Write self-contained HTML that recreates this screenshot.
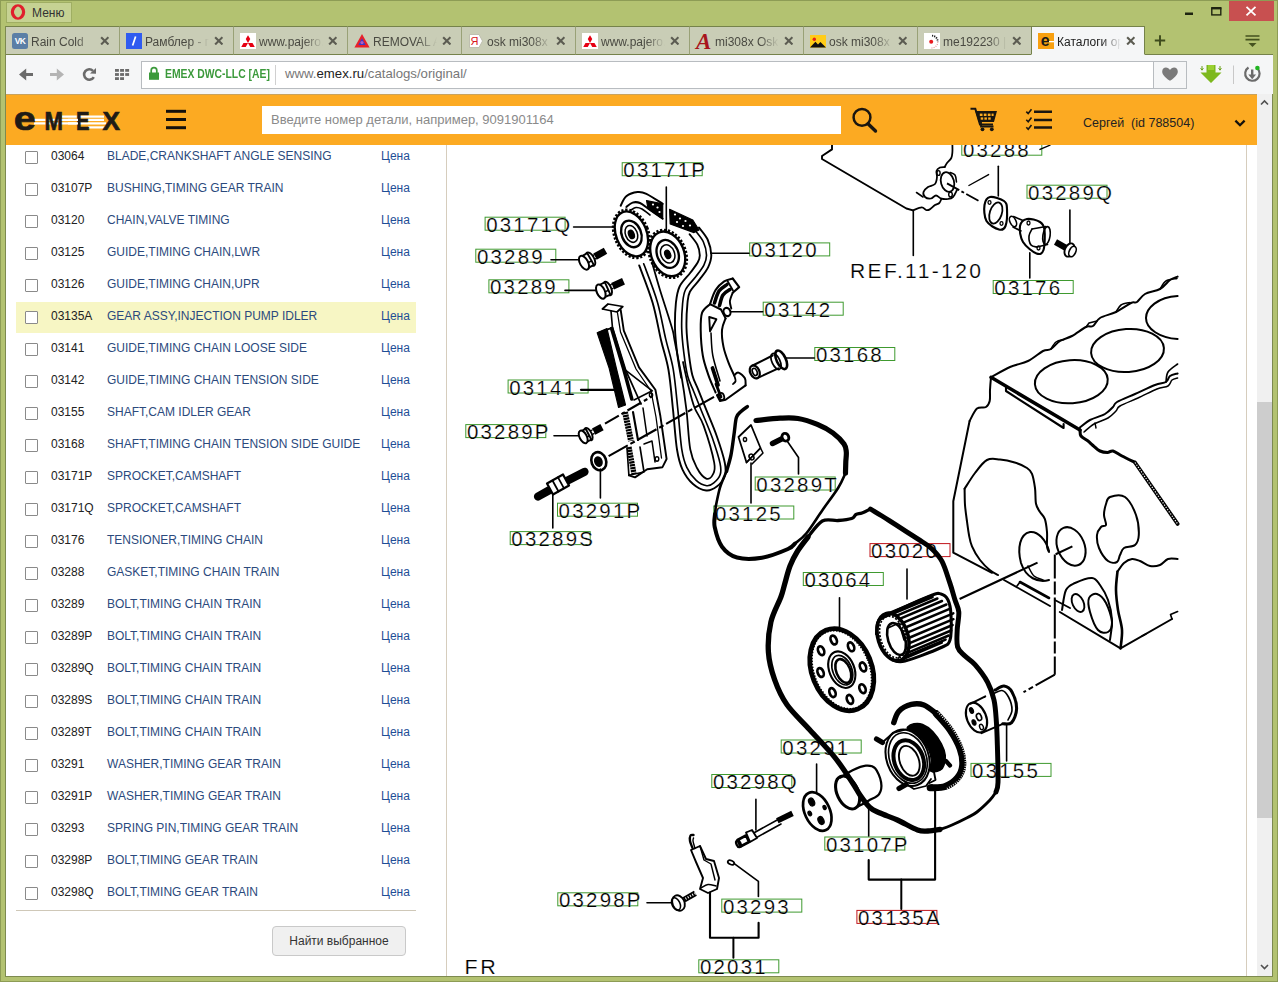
<!DOCTYPE html>
<html lang="ru">
<head>
<meta charset="utf-8">
<title>Каталоги оригинальных запчастей</title>
<style>
*{box-sizing:border-box;margin:0;padding:0}
html,body{width:1278px;height:982px;overflow:hidden}
body{background:#b3c271;font-family:"Liberation Sans","DejaVu Sans",sans-serif;font-size:13px;color:#222;position:relative}
.abs{position:absolute}
#frame{left:0;top:0;width:1278px;height:982px;border:1px solid #8d9c55}
/* title bar */
#menu{left:6px;top:2px;width:66px;height:21px;background:#c6d293;border:1px solid #9fae63;font-size:12px;color:#333;line-height:20px;padding-left:25px}
#close{left:1229px;top:1px;width:45px;height:20px;background:#c85050}
/* tabs */
#tabbar{left:6px;top:26px;width:1267px;height:29px;border-bottom:1px solid #75824a}
.tab{position:absolute;top:26px;height:29px;width:114px;background:#c9cdb6;border-top:1px solid #75824a;border-bottom:1px solid #75824a;border-right:1px solid #99a177;font-size:12px;color:#4a4a42;line-height:30px;white-space:nowrap;overflow:hidden}
.tab .t{position:absolute;left:25px;top:0;width:64px;overflow:hidden;-webkit-mask-image:linear-gradient(90deg,#000 70%,transparent 100%);mask-image:linear-gradient(90deg,#000 70%,transparent 100%)}
.tab .x{position:absolute;left:93.5px;top:8.5px;width:9.6px;height:9.6px}
.tab .ic{position:absolute;left:6px;top:6px;width:16px;height:16px;overflow:visible}
.tab.act{background:#f5f6f7;border-bottom-color:#f5f6f7;border-right:1px solid #75824a;border-left:1px solid #75824a;color:#222}
/* toolbar */
#toolbar{left:6px;top:55px;width:1267px;height:39px;background:#f5f6f7}
#addr{left:141px;top:61px;width:1046px;height:28px;background:#fff;border:1px solid #b8bcc0}
#addr .div{position:absolute;left:1011px;top:0;width:1px;height:26px;background:#b8bcc0}
#addr .heartbg{position:absolute;left:1012px;top:0;width:32px;height:26px;background:#f5f6f7}
#secure{left:165px;top:66px;font-weight:bold;font-size:12.5px;color:#3c9a3c;line-height:16px;white-space:nowrap;transform:scaleX(0.83);transform-origin:0 0}
#url{left:285px;top:65px;font-size:13.2px;color:#777;line-height:18px;white-space:nowrap}
#url b{font-weight:normal;color:#222}
/* page */
#page{left:6px;top:94px;width:1251px;height:882px;background:#fff;overflow:hidden}
#hdr{left:6px;top:94px;width:1251px;height:51px;background:#fcaa22;border-top:1px solid #c9a25c}
#search{left:262px;top:106px;width:579px;height:28px;background:#fff;font-size:13px;color:#8a8a8a;line-height:28px;padding-left:9px}
#user{left:1083px;top:115px;font-size:12.5px;color:#222;line-height:16px;white-space:pre}
#vscroll{left:1257px;top:94px;width:15px;height:882px;background:#f0f0f0}
#thumb{left:1257px;top:402px;width:15px;height:416px;background:#cdcdcd}
/* list */
.row{position:absolute;left:16px;width:400px;height:31px;line-height:28px;font-size:12px;white-space:nowrap}
.row.hl{background:#f7f6c4}
.row i{position:absolute;left:9px;top:9px;width:13px;height:13px;border:1px solid #8a8a8a;background:#fff;border-radius:1px}
.row .c{position:absolute;left:35px;color:#222}
.row .n{position:absolute;left:91px;color:#2b4a7d}
.row .p{position:absolute;left:365px;color:#1f4e96}
#lline{left:16px;top:910px;width:400px;height:1px;background:#cfc8b8}
#btn{left:272px;top:926px;width:134px;height:30px;border:1px solid #c9c9c9;border-radius:4px;background:#f0f0f0;font-size:12px;color:#333;text-align:center;line-height:28px}
#dl{left:446px;top:145px;width:1px;height:831px;background:#d6cdbd}
#dr{left:1246px;top:145px;width:1px;height:831px;background:#d6cdbd}
#dia{left:447px;top:145px;width:799px;height:831px}
</style>
</head>
<body>
<div id="frame" class="abs"></div>
<div class="abs" style="left:5px;top:26px;width:1px;height:951px;background:#7d8a50"></div><div class="abs" style="left:1272px;top:55px;width:1px;height:922px;background:#7d8a50"></div><div class="abs" style="left:5px;top:976px;width:1268px;height:1px;background:#7d8a50"></div>
<div id="menu" class="abs">Меню</div>
<div id="close" class="abs"></div>
<div id="tabbar" class="abs"></div>
<div class="tab" style="left:6px"><svg class="ic" viewBox="0 0 16 16"><rect width="16" height="16" rx="2.5" fill="#5b7fa6"/><text x="8" y="11.3" font-family="Liberation Sans,sans-serif" font-weight="bold" font-size="8.5" fill="#fff" text-anchor="middle" letter-spacing="-0.6">VK</text></svg><span class="t">Rain Cold</span><svg class="x" viewBox="0 0 10 10"><path d="M1.2 1.2L8.8 8.8M8.8 1.2L1.2 8.8" stroke="#5c5c52" stroke-width="2.2" fill="none"/></svg></div>
<div class="tab" style="left:120px"><svg class="ic" viewBox="0 0 16 16"><rect width="16" height="16" fill="#2f5bf0"/><path d="M9.6 3.5L6.6 12.5" stroke="#fff" stroke-width="1.7"/></svg><span class="t">Рамблер - почта</span><svg class="x" viewBox="0 0 10 10"><path d="M1.2 1.2L8.8 8.8M8.8 1.2L1.2 8.8" stroke="#5c5c52" stroke-width="2.2" fill="none"/></svg></div>
<div class="tab" style="left:234px"><svg class="ic" viewBox="0 0 16 16"><rect width="16" height="16" fill="#fff"/><path d="M8 10L5.750 6.100L8 2.200L10.250 6.100Z M8 10L3.500 10L1.250 13.900L5.750 13.900Z M8 10L12.500 10L14.750 13.900L10.250 13.900Z" fill="#e60012"/></svg><span class="t">www.pajero.us</span><svg class="x" viewBox="0 0 10 10"><path d="M1.2 1.2L8.8 8.8M8.8 1.2L1.2 8.8" stroke="#5c5c52" stroke-width="2.2" fill="none"/></svg></div>
<div class="tab" style="left:348px"><svg class="ic" viewBox="0 0 16 16"><path d="M8 1L15.6 14.5L0.4 14.5Z" fill="#e8202a"/><path d="M8 5.2L11.6 12L4.4 12Z" fill="#3a3acb"/><circle cx="8" cy="9.6" r="1.6" fill="#b060c0"/></svg><span class="t">REMOVAL AND</span><svg class="x" viewBox="0 0 10 10"><path d="M1.2 1.2L8.8 8.8M8.8 1.2L1.2 8.8" stroke="#5c5c52" stroke-width="2.2" fill="none"/></svg></div>
<div class="tab" style="left:462px"><svg class="ic" viewBox="0 0 16 16"><path d="M1.5 1.5H11L14.5 8L11 14.5H1.5Z" fill="#fff" stroke="#b5b5a5" stroke-width="0.8"/><text x="6.6" y="12" font-family="Liberation Sans,sans-serif" font-size="11" fill="#d8171e" text-anchor="middle">Я</text></svg><span class="t">osk mi308x —</span><svg class="x" viewBox="0 0 10 10"><path d="M1.2 1.2L8.8 8.8M8.8 1.2L1.2 8.8" stroke="#5c5c52" stroke-width="2.2" fill="none"/></svg></div>
<div class="tab" style="left:576px"><svg class="ic" viewBox="0 0 16 16"><rect width="16" height="16" fill="#fff"/><path d="M8 10L5.750 6.100L8 2.200L10.250 6.100Z M8 10L3.500 10L1.250 13.900L5.750 13.900Z M8 10L12.500 10L14.750 13.900L10.250 13.900Z" fill="#e60012"/></svg><span class="t">www.pajero.us</span><svg class="x" viewBox="0 0 10 10"><path d="M1.2 1.2L8.8 8.8M8.8 1.2L1.2 8.8" stroke="#5c5c52" stroke-width="2.2" fill="none"/></svg></div>
<div class="tab" style="left:690px"><svg class="ic" viewBox="0 0 16 16"><text x="7.6" y="16" font-family="Liberation Serif,serif" font-style="italic" font-weight="bold" font-size="23" fill="#a8141c" text-anchor="middle">A</text></svg><span class="t">mi308x Osk</span><svg class="x" viewBox="0 0 10 10"><path d="M1.2 1.2L8.8 8.8M8.8 1.2L1.2 8.8" stroke="#5c5c52" stroke-width="2.2" fill="none"/></svg></div>
<div class="tab" style="left:804px"><svg class="ic" viewBox="0 0 16 16"><rect x="0" y="2" width="16" height="12.5" fill="#ffcc18"/><circle cx="4.3" cy="6.2" r="1.7" fill="#e8201c"/><path d="M0 14.5L5.4 8.8L8 11.4L10.4 9L16 14.5Z" fill="#111"/></svg><span class="t">osk mi308x -</span><svg class="x" viewBox="0 0 10 10"><path d="M1.2 1.2L8.8 8.8M8.8 1.2L1.2 8.8" stroke="#5c5c52" stroke-width="2.2" fill="none"/></svg></div>
<div class="tab" style="left:918px"><svg class="ic" viewBox="0 0 16 16"><rect width="16" height="16" fill="#fff"/><circle cx="7.2" cy="8.8" r="2" fill="#e8181c"/><path d="M8 2.6A6.2 6.2 0 0 1 13.8 8.8" stroke="#222" stroke-width="1.8" stroke-dasharray="1.2 1" fill="none"/><path d="M13.8 8.8A6.2 6.2 0 0 1 6.5 14.9" stroke="#e89090" stroke-width="1.2" stroke-dasharray="1 1.2" fill="none"/></svg><span class="t">me192230 |</span><svg class="x" viewBox="0 0 10 10"><path d="M1.2 1.2L8.8 8.8M8.8 1.2L1.2 8.8" stroke="#5c5c52" stroke-width="2.2" fill="none"/></svg></div>
<div class="tab act" style="left:1031px"><svg class="ic" viewBox="0 0 16 16"><rect width="16" height="16" fill="#f8a010"/><text x="7.3" y="12.6" font-family="Liberation Sans,sans-serif" font-weight="bold" font-size="16" fill="#1a1a1a" text-anchor="middle">e</text><rect x="11" y="8" width="5" height="1.3" fill="#fff"/></svg><span class="t">Каталоги ориг</span><svg class="x" viewBox="0 0 10 10"><path d="M1.2 1.2L8.8 8.8M8.8 1.2L1.2 8.8" stroke="#5c5c52" stroke-width="2.2" fill="none"/></svg></div>
<div id="toolbar" class="abs"></div>
<div id="addr" class="abs"><div class="heartbg"></div><div class="div"></div></div>
<div id="secure" class="abs">EMEX DWC-LLC [AE]</div>
<div id="url" class="abs">www.<b>emex.ru</b>/catalogs/original/</div>
<div id="page" class="abs"></div>
<div class="row" style="top:142px"><i></i><span class="c">03064</span><span class="n">BLADE,CRANKSHAFT ANGLE SENSING</span><span class="p">Цена</span></div>
<div class="row" style="top:174px"><i></i><span class="c">03107P</span><span class="n">BUSHING,TIMING GEAR TRAIN</span><span class="p">Цена</span></div>
<div class="row" style="top:206px"><i></i><span class="c">03120</span><span class="n">CHAIN,VALVE TIMING</span><span class="p">Цена</span></div>
<div class="row" style="top:238px"><i></i><span class="c">03125</span><span class="n">GUIDE,TIMING CHAIN,LWR</span><span class="p">Цена</span></div>
<div class="row" style="top:270px"><i></i><span class="c">03126</span><span class="n">GUIDE,TIMING CHAIN,UPR</span><span class="p">Цена</span></div>
<div class="row hl" style="top:302px"><i></i><span class="c">03135A</span><span class="n">GEAR ASSY,INJECTION PUMP IDLER</span><span class="p">Цена</span></div>
<div class="row" style="top:334px"><i></i><span class="c">03141</span><span class="n">GUIDE,TIMING CHAIN LOOSE SIDE</span><span class="p">Цена</span></div>
<div class="row" style="top:366px"><i></i><span class="c">03142</span><span class="n">GUIDE,TIMING CHAIN TENSION SIDE</span><span class="p">Цена</span></div>
<div class="row" style="top:398px"><i></i><span class="c">03155</span><span class="n">SHAFT,CAM IDLER GEAR</span><span class="p">Цена</span></div>
<div class="row" style="top:430px"><i></i><span class="c">03168</span><span class="n">SHAFT,TIMING CHAIN TENSION SIDE GUIDE</span><span class="p">Цена</span></div>
<div class="row" style="top:462px"><i></i><span class="c">03171P</span><span class="n">SPROCKET,CAMSHAFT</span><span class="p">Цена</span></div>
<div class="row" style="top:494px"><i></i><span class="c">03171Q</span><span class="n">SPROCKET,CAMSHAFT</span><span class="p">Цена</span></div>
<div class="row" style="top:526px"><i></i><span class="c">03176</span><span class="n">TENSIONER,TIMING CHAIN</span><span class="p">Цена</span></div>
<div class="row" style="top:558px"><i></i><span class="c">03288</span><span class="n">GASKET,TIMING CHAIN TRAIN</span><span class="p">Цена</span></div>
<div class="row" style="top:590px"><i></i><span class="c">03289</span><span class="n">BOLT,TIMING CHAIN TRAIN</span><span class="p">Цена</span></div>
<div class="row" style="top:622px"><i></i><span class="c">03289P</span><span class="n">BOLT,TIMING CHAIN TRAIN</span><span class="p">Цена</span></div>
<div class="row" style="top:654px"><i></i><span class="c">03289Q</span><span class="n">BOLT,TIMING CHAIN TRAIN</span><span class="p">Цена</span></div>
<div class="row" style="top:686px"><i></i><span class="c">03289S</span><span class="n">BOLT,TIMING CHAIN TRAIN</span><span class="p">Цена</span></div>
<div class="row" style="top:718px"><i></i><span class="c">03289T</span><span class="n">BOLT,TIMING CHAIN TRAIN</span><span class="p">Цена</span></div>
<div class="row" style="top:750px"><i></i><span class="c">03291</span><span class="n">WASHER,TIMING GEAR TRAIN</span><span class="p">Цена</span></div>
<div class="row" style="top:782px"><i></i><span class="c">03291P</span><span class="n">WASHER,TIMING GEAR TRAIN</span><span class="p">Цена</span></div>
<div class="row" style="top:814px"><i></i><span class="c">03293</span><span class="n">SPRING PIN,TIMING GEAR TRAIN</span><span class="p">Цена</span></div>
<div class="row" style="top:846px"><i></i><span class="c">03298P</span><span class="n">BOLT,TIMING GEAR TRAIN</span><span class="p">Цена</span></div>
<div class="row" style="top:878px"><i></i><span class="c">03298Q</span><span class="n">BOLT,TIMING GEAR TRAIN</span><span class="p">Цена</span></div>
<div id="lline" class="abs"></div>
<div id="btn" class="abs">Найти выбранное</div>
<div id="dl" class="abs"></div>
<div id="dr" class="abs"></div>
<svg id="dia" class="abs" viewBox="447 145 799 831" width="799" height="831"><style>#dia .lt{font-family:"Liberation Sans",sans-serif;font-size:19.5px;letter-spacing:2.1px;fill:#000;stroke:#fff;stroke-width:0.2px}</style>
<g fill="none" stroke="#000" stroke-linecap="round" stroke-linejoin="round">
<rect x="622.2" y="162.7" width="80" height="13" stroke="#3f9a2f" stroke-width="1" stroke-linejoin="miter"/>
<text transform="translate(623.3 177.2) scale(1.05 1)" class="lt">03171P</text>
<rect x="485.1" y="217.2" width="80" height="13" stroke="#3f9a2f" stroke-width="1" stroke-linejoin="miter"/>
<text transform="translate(486.2 231.7) scale(1.05 1)" class="lt">03171Q</text>
<rect x="475.8" y="249.2" width="80" height="13" stroke="#3f9a2f" stroke-width="1" stroke-linejoin="miter"/>
<text transform="translate(476.9 263.7) scale(1.05 1)" class="lt">03289</text>
<rect x="488.9" y="279.8" width="80" height="13" stroke="#3f9a2f" stroke-width="1" stroke-linejoin="miter"/>
<text transform="translate(490.0 294.3) scale(1.05 1)" class="lt">03289</text>
<rect x="508.1" y="380.0" width="80" height="13" stroke="#3f9a2f" stroke-width="1" stroke-linejoin="miter"/>
<text transform="translate(509.2 394.5) scale(1.05 1)" class="lt">03141</text>
<rect x="465.8" y="424.6" width="80" height="13" stroke="#3f9a2f" stroke-width="1" stroke-linejoin="miter"/>
<text transform="translate(466.9 439.1) scale(1.05 1)" class="lt">03289P</text>
<rect x="557.5" y="503.2" width="80" height="13" stroke="#3f9a2f" stroke-width="1" stroke-linejoin="miter"/>
<text transform="translate(558.6 517.7) scale(1.05 1)" class="lt">03291P</text>
<rect x="510.2" y="531.6" width="80" height="13" stroke="#3f9a2f" stroke-width="1" stroke-linejoin="miter"/>
<text transform="translate(511.3 546.1) scale(1.05 1)" class="lt">03289S</text>
<rect x="713.8" y="506.0" width="80" height="13" stroke="#3f9a2f" stroke-width="1" stroke-linejoin="miter"/>
<text transform="translate(714.9 520.5) scale(1.05 1)" class="lt">03125</text>
<rect x="755.2" y="477.0" width="80" height="13" stroke="#3f9a2f" stroke-width="1" stroke-linejoin="miter"/>
<text transform="translate(756.3 491.5) scale(1.05 1)" class="lt">03289T</text>
<rect x="749.7" y="242.9" width="80" height="13" stroke="#3f9a2f" stroke-width="1" stroke-linejoin="miter"/>
<text transform="translate(750.8 257.4) scale(1.05 1)" class="lt">03120</text>
<rect x="763.2" y="302.2" width="80" height="13" stroke="#3f9a2f" stroke-width="1" stroke-linejoin="miter"/>
<text transform="translate(764.3 316.7) scale(1.05 1)" class="lt">03142</text>
<rect x="814.8" y="347.5" width="80" height="13" stroke="#3f9a2f" stroke-width="1" stroke-linejoin="miter"/>
<text transform="translate(815.9 362.0) scale(1.05 1)" class="lt">03168</text>
<rect x="961.8" y="142.2" width="80" height="13" stroke="#3f9a2f" stroke-width="1" stroke-linejoin="miter"/>
<text transform="translate(962.9 156.7) scale(1.05 1)" class="lt">03288</text>
<rect x="1027.0" y="185.2" width="80" height="13" stroke="#3f9a2f" stroke-width="1" stroke-linejoin="miter"/>
<text transform="translate(1028.1 199.7) scale(1.05 1)" class="lt">03289Q</text>
<rect x="993.2" y="280.5" width="80" height="13" stroke="#3f9a2f" stroke-width="1" stroke-linejoin="miter"/>
<text transform="translate(994.3 295.0) scale(1.05 1)" class="lt">03176</text>
<rect x="803.3" y="572.5" width="80" height="13" stroke="#3f9a2f" stroke-width="1" stroke-linejoin="miter"/>
<text transform="translate(804.4 587.0) scale(1.05 1)" class="lt">03064</text>
<rect x="781.2" y="740.0" width="80" height="13" stroke="#3f9a2f" stroke-width="1" stroke-linejoin="miter"/>
<text transform="translate(782.3 754.5) scale(1.05 1)" class="lt">03291</text>
<rect x="711.8" y="774.5" width="80" height="13" stroke="#3f9a2f" stroke-width="1" stroke-linejoin="miter"/>
<text transform="translate(712.9 789.0) scale(1.05 1)" class="lt">03298Q</text>
<rect x="971.0" y="763.4" width="80" height="13" stroke="#3f9a2f" stroke-width="1" stroke-linejoin="miter"/>
<text transform="translate(972.1 777.9) scale(1.05 1)" class="lt">03155</text>
<rect x="824.8" y="837.0" width="80" height="13" stroke="#3f9a2f" stroke-width="1" stroke-linejoin="miter"/>
<text transform="translate(825.9 851.5) scale(1.05 1)" class="lt">03107P</text>
<rect x="721.8" y="899.1" width="80" height="13" stroke="#3f9a2f" stroke-width="1" stroke-linejoin="miter"/>
<text transform="translate(722.9 913.6) scale(1.05 1)" class="lt">03293</text>
<rect x="557.8" y="892.8" width="80" height="13" stroke="#3f9a2f" stroke-width="1" stroke-linejoin="miter"/>
<text transform="translate(558.9 907.3) scale(1.05 1)" class="lt">03298P</text>
<rect x="698.8" y="959.8" width="80" height="13" stroke="#3f9a2f" stroke-width="1" stroke-linejoin="miter"/>
<text transform="translate(699.9 974.3) scale(1.05 1)" class="lt">02031</text>
<rect x="870.0" y="543.6" width="80" height="13" stroke="#c0141c" stroke-width="1" stroke-linejoin="miter"/>
<text transform="translate(871.1 558.1) scale(1.05 1)" class="lt">03020</text>
<rect x="856.9" y="910.4" width="80" height="13" stroke="#c0141c" stroke-width="1" stroke-linejoin="miter"/>
<text transform="translate(858.0 924.9) scale(1.05 1)" class="lt">03135A</text>
<text transform="translate(850 278.3) scale(1.08 1)" class="lt" style="letter-spacing:2.2px">REF.11-120</text>
<text transform="translate(464.5 974.3) scale(1.1 1)" class="lt" style="letter-spacing:2.5px">FR</text>
<path d="M666.3 187L666.3 231" stroke-width="1.6"/>
<path d="M573.6 227L614 227" stroke-width="1.6"/>
<path d="M551 259.8L579 259.8" stroke-width="1.6"/>
<path d="M565 290.4L597 290.4" stroke-width="1.6"/>
<path d="M581 389.8L616 389.8" stroke-width="2.2"/>
<path d="M554 435.7L578.6 435.7" stroke-width="1.6"/>
<path d="M600.4 469L600.4 498" stroke-width="1.6"/>
<path d="M552.8 494L552.8 528" stroke-width="1.6"/>
<path d="M751 463L751 503" stroke-width="1.6"/>
<path d="M787.3 441.2 L798.5 457.5 L798.5 474.0" stroke-width="1.65" />
<path d="M710.8 253.3L749 253.3" stroke-width="1.6"/>
<path d="M731 311.7L762.7 311.7" stroke-width="1.6"/>
<path d="M786 358L814.3 358" stroke-width="1.6"/>
<path d="M913.3 210.7L913.3 255.5" stroke-width="1.6"/>
<path d="M998.3 166.3L998.3 196" stroke-width="1.6"/>
<path d="M1069.9 210L1069.9 245" stroke-width="1.6"/>
<path d="M1029.8 252.8L1029.8 278" stroke-width="1.6"/>
<path d="M907 569L907 599" stroke-width="1.6"/>
<path d="M839.5 597.8L839.5 628" stroke-width="1.6"/>
<path d="M816.6 764L816.6 792.4" stroke-width="1.6"/>
<path d="M755.9 799.4L755.9 830" stroke-width="1.6"/>
<path d="M1006.6 724.8L1006.6 761" stroke-width="1.6"/>
<path d="M868.7 808L868.7 836" stroke-width="1.6"/>
<path d="M868.7 860.0 L868.7 879.6 L935.1 879.6 L935.1 786.0" stroke-width="2.12" />
<path d="M901.3 879.6L901.3 909" stroke-width="2"/>
<path d="M734.6 863.8 L758.4 881.4 L758.4 896.4" stroke-width="1.65" />
<path d="M710.0 892.6 L710.0 937.8 L758.6 937.8 L758.6 922.7" stroke-width="2.12" />
<path d="M733.4 937.8L733.4 957.8" stroke-width="2"/>
<path d="M647 902.7L671.3 902.7" stroke-width="1.6"/>
<ellipse cx="631.4" cy="233.9" rx="16.7" ry="24.8" transform="rotate(-22 631.4 233.9)" stroke-width="3.07" stroke-linecap="butt" stroke-dasharray="2.2 1.7"/>
<ellipse cx="631.4" cy="233.9" rx="15.299999999999999" ry="23.4" transform="rotate(-22 631.4 233.9)" stroke-width="2.36" />
<ellipse cx="631.4" cy="233.9" rx="9.7" ry="13.8" transform="rotate(-22 631.4 233.9)" stroke-width="2.36" />
<ellipse cx="631.4" cy="233.9" rx="5.8999999999999995" ry="8.8" transform="rotate(-22 631.4 233.9)" stroke-width="1.53" />
<ellipse cx="631.4" cy="234.4" rx="2.8" ry="4.4" transform="rotate(-22 631.4 234.4)" stroke-width="1.18" fill="#000"/>
<ellipse cx="667.7" cy="253.9" rx="17.8" ry="24.5" transform="rotate(-22 667.7 253.9)" stroke-width="3.07" stroke-linecap="butt" stroke-dasharray="2.2 1.7"/>
<ellipse cx="667.7" cy="253.9" rx="16.4" ry="23.099999999999998" transform="rotate(-22 667.7 253.9)" stroke-width="2.36" />
<ellipse cx="667.7" cy="253.9" rx="10.6" ry="14.4" transform="rotate(-22 667.7 253.9)" stroke-width="2.36" />
<ellipse cx="667.7" cy="253.9" rx="6.8" ry="9.4" transform="rotate(-22 667.7 253.9)" stroke-width="1.53" />
<ellipse cx="667.7" cy="254.4" rx="2.8" ry="4.4" transform="rotate(-22 667.7 254.4)" stroke-width="1.18" fill="#000"/>
<path d="M620.7 205.7C621.6 204.1 623.5 198.6 626.3 196.3C629.1 194.0 634.2 192.4 637.6 192.0C641.0 191.6 642.2 191.8 646.4 193.8C650.6 195.8 660.0 202.1 662.7 203.8" stroke-width="2.01" />
<path d="M626.3 207.0C627.3 206.3 630.3 203.3 632.6 202.6C634.9 201.9 637.1 201.8 640.0 203.0C642.9 204.2 646.2 207.4 650.0 210.0C653.8 212.6 660.6 217.3 662.7 218.8" stroke-width="2.01" />
<path d="M631.0 210.0C631.8 209.6 634.2 207.7 636.0 207.5C637.8 207.3 639.7 207.8 642.0 209.0C644.3 210.2 648.7 214.0 650.0 215.0" stroke-width="1.65" />
<path d="M646.5 200.5 L662.7 203.8 L662.7 218.8 L648.0 208.5Z" stroke-width="1.18" fill="#000"/>
<path d="M669.6 209.4 L692.8 220.0 L699.0 230.0 L694.0 232.6 L670.2 223.9Z" stroke-width="1.18" fill="#000"/>
<circle cx="653" cy="204.5" r="1.1" fill="#fff" stroke="none"/>
<circle cx="657.5" cy="207.5" r="1.1" fill="#fff" stroke="none"/>
<circle cx="659.5" cy="212" r="1.1" fill="#fff" stroke="none"/>
<circle cx="675" cy="214.5" r="1.1" fill="#fff" stroke="none"/>
<circle cx="680" cy="218.5" r="1.1" fill="#fff" stroke="none"/>
<circle cx="685.5" cy="221" r="1.1" fill="#fff" stroke="none"/>
<circle cx="690" cy="225.5" r="1.1" fill="#fff" stroke="none"/>
<circle cx="677" cy="222" r="1.1" fill="#fff" stroke="none"/>
<circle cx="683" cy="226" r="1.1" fill="#fff" stroke="none"/>
<path d="M699.0 227.6C700.5 229.7 705.8 235.4 707.8 240.0C709.8 244.6 711.2 250.5 711.3 255.0C711.4 259.5 710.1 263.1 708.2 267.2C706.3 271.3 702.8 275.3 699.7 279.4C696.7 283.5 692.0 287.6 689.9 291.7C687.8 295.8 688.0 297.8 687.4 303.9C686.8 310.0 686.3 320.1 686.5 328.3C686.7 336.5 687.7 345.0 688.7 352.8C689.7 360.6 690.7 368.8 692.3 375.0C693.9 381.2 696.0 384.1 698.3 389.9C700.6 395.7 703.1 402.0 706.2 409.7C709.3 417.4 713.7 427.4 716.8 436.2C719.9 445.0 723.5 456.1 724.8 462.7C726.1 469.3 726.1 472.0 724.8 476.0C723.5 480.0 719.9 484.2 716.8 486.6C713.7 489.0 710.2 490.9 706.2 490.5C702.2 490.1 697.0 487.5 693.0 484.0C689.0 480.5 685.1 475.1 682.4 469.3C679.7 463.6 678.6 459.4 677.0 449.5C675.4 439.6 674.4 422.9 673.0 409.7C671.6 396.4 670.5 381.6 668.5 370.0C666.5 358.4 663.6 351.2 661.0 340.0C658.4 328.8 656.3 315.4 652.7 303.0C649.1 290.6 641.5 271.7 639.2 265.4" stroke-width="1.89" />
<path d="M695.1 230.4C696.5 232.3 701.5 237.9 703.4 242.0C705.3 246.1 706.4 251.2 706.5 255.1C706.6 258.9 705.6 261.6 703.9 265.1C702.1 268.7 698.9 272.5 695.9 276.5C692.8 280.6 687.8 285.1 685.6 289.5C683.4 294.0 683.3 297.0 682.6 303.5C682.0 309.9 681.5 320.1 681.7 328.4C681.9 336.8 682.9 345.4 683.9 353.4C684.9 361.4 686.0 369.8 687.7 376.2C689.3 382.6 691.5 385.8 693.8 391.7C696.2 397.6 698.7 403.8 701.7 411.5C704.8 419.2 709.2 429.1 712.3 437.8C715.3 446.5 718.8 457.5 720.1 463.6C721.4 469.8 721.3 471.3 720.2 474.5C719.2 477.7 716.1 480.9 713.8 482.8C711.6 484.7 709.7 486.1 706.7 485.7C703.8 485.3 699.5 483.5 696.2 480.4C692.9 477.3 689.2 472.6 686.8 467.3C684.3 462.0 683.2 458.4 681.7 448.8C680.2 439.1 679.2 422.5 677.8 409.2C676.4 395.9 675.2 380.9 673.2 369.2C671.2 357.5 668.3 350.2 665.7 338.9C663.0 327.6 661.0 314.2 657.3 301.7C653.6 289.1 646.0 270.1 643.7 263.8" stroke-width="1.65" />
<path d="M689.6 234.3C690.9 236.0 695.6 241.2 697.3 244.7C699.0 248.2 699.7 252.2 699.8 255.2C699.9 258.1 699.4 259.4 697.8 262.3C696.3 265.2 693.5 268.5 690.5 272.5C687.5 276.6 682.0 281.5 679.6 286.5C677.2 291.6 676.7 295.8 675.9 302.8C675.2 309.8 674.8 320.0 675.0 328.6C675.2 337.2 676.3 346.0 677.3 354.2C678.3 362.4 680.5 373.9 681.2 377.9" stroke-width="1.89" />
<path d="M652.0 262.3C653.3 266.9 657.3 281.2 660.0 290.0C662.7 298.8 665.9 308.2 668.0 315.0C670.1 321.8 671.7 326.6 672.8 330.8C673.9 335.1 673.2 333.1 674.6 340.5C676.0 347.9 679.3 363.5 681.3 375.0C683.3 386.5 684.9 397.3 686.4 409.7C687.9 422.1 688.5 439.8 690.3 449.5C692.1 459.2 694.4 463.1 697.0 468.0C699.6 472.9 703.6 477.5 706.2 478.6C708.8 479.7 711.5 477.2 712.8 474.6C714.1 472.0 715.7 470.9 714.2 462.7C712.7 454.5 706.9 434.9 703.6 425.6C700.3 416.3 696.9 414.1 694.3 407.0C691.6 399.9 689.6 390.7 687.7 383.2C685.8 375.7 683.8 365.5 683.0 362.0" stroke-width="1.77" />
<path d="M605.5 250.8L595.0 256.6" stroke-width="7" stroke-linecap="butt"/>
<path d="M595.0 256.6L590.6 259.1" stroke-width="5.5" stroke-linecap="butt"/>
<path d="M595.0 256.6L590.6 259.1" stroke="#fff" stroke-width="2.8" stroke-linecap="butt"/>
<ellipse cx="590.6" cy="259.1" rx="3.5" ry="7.4" transform="rotate(-29.0 590.6 259.1)" fill="#fff" stroke-width="1.9"/>
<path d="M587.2 268.6 L593.8 264.9 L587.3 253.2 L580.8 256.8Z" fill="#fff" stroke-width="1.9"/>
<path d="M585.0 264.5L591.5 260.8" stroke-width="1.5"/>
<ellipse cx="584.0" cy="262.7" rx="4.0" ry="7.6" transform="rotate(-29.0 584.0 262.7)" fill="#fff" stroke-width="2"/>
<path d="M623.5 281.3L612.6 286.3" stroke-width="7" stroke-linecap="butt"/>
<path d="M612.6 286.3L607.6 288.5" stroke-width="5.5" stroke-linecap="butt"/>
<path d="M612.6 286.3L607.6 288.5" stroke="#fff" stroke-width="2.8" stroke-linecap="butt"/>
<ellipse cx="607.6" cy="288.5" rx="3.5" ry="7.4" transform="rotate(-24.4 607.6 288.5)" fill="#fff" stroke-width="1.9"/>
<path d="M603.6 297.7 L610.4 294.6 L604.9 282.4 L598.0 285.5Z" fill="#fff" stroke-width="1.9"/>
<path d="M601.6 293.4L608.5 290.3" stroke-width="1.5"/>
<ellipse cx="600.8" cy="291.6" rx="4.0" ry="7.6" transform="rotate(-24.4 600.8 291.6)" fill="#fff" stroke-width="2"/>
<path d="M602.0 427.2L593.6 431.6" stroke-width="7" stroke-linecap="butt"/>
<path d="M593.6 431.6L588.5 434.1" stroke-width="5.5" stroke-linecap="butt"/>
<path d="M593.6 431.6L588.5 434.1" stroke="#fff" stroke-width="2.8" stroke-linecap="butt"/>
<ellipse cx="588.5" cy="434.1" rx="3.1" ry="6.8" transform="rotate(-27.3 588.5 434.1)" fill="#fff" stroke-width="1.9"/>
<path d="M586.0 442.3 L591.3 439.5 L585.7 428.8 L580.4 431.5Z" fill="#fff" stroke-width="1.9"/>
<path d="M584.0 438.5L589.4 435.8" stroke-width="1.5"/>
<ellipse cx="583.2" cy="436.9" rx="3.6" ry="6.9" transform="rotate(-27.3 583.2 436.9)" fill="#fff" stroke-width="2"/>
<path d="M584.5 471.8L566 481.3" stroke-width="8.26" />
<path d="M538 496.5L549 490.3" stroke-width="8.26" />
<path d="M563.0 474.5 L569.0 485.5 L553.0 494.5 L547.0 483.5Z" stroke-width="2.24" fill="#fff"/>
<path d="M558.0 477.3 L564.0 488.3" stroke-width="1.77" />
<path d="M552.5 480.5 L558.5 491.5" stroke-width="1.77" />
<ellipse cx="598.8" cy="461.2" rx="7.3" ry="9.3" transform="rotate(-20 598.8 461.2)" stroke-width="2.60" />
<ellipse cx="598.4" cy="461.6" rx="3.4" ry="4.6" transform="rotate(-20 598.4 461.6)" stroke-width="1.77" fill="#000"/>
<path d="M605 423.6L652.5 396" stroke-width="2.12" stroke-linecap="butt" stroke-dasharray="16 3 4 3"/>
<path d="M608.6 456.2L720 393.5" stroke-width="2.12" stroke-linecap="butt" stroke-dasharray="22 3 5 3"/>
<path d="M602.4 309.0 L608.0 304.0 L622.8 306.5 L617.0 312.0 L602.4 309.0" stroke-width="1.77" />
<path d="M611.0 311.0 L612.5 328.0" stroke-width="1.65" />
<path d="M620.7 310.0 L623.8 330.7 L639.0 367.4 L655.4 389.8 L660.4 416.3 L666.6 459.0 L662.5 467.2 L647.2 469.2 L635.0 477.4 L628.9 475.3" stroke-width="1.89" />
<path d="M617.5 313.0 L620.5 332.0 L636.0 369.0 L651.0 391.0 L656.0 417.0 L661.5 458.0" stroke-width="1.30" />
<path d="M598.3 332.8 L612.6 327.7 L625.8 370.4 L641.0 404.0" stroke-width="1.77" />
<path d="M597.2 332.9 L607.0 328.6 L616.4 368.3 L625.5 405.0 L618.6 407.5 L609.2 368.3Z" stroke-width="1.18" fill="#000"/>
<path d="M611.6 328.5 L623.5 368.3 L631.8 399.0" stroke-width="3.54" />
<path d="M625.0 412.0 L631.0 441.0" stroke-width="5.90" stroke-linecap="butt" stroke-dasharray="2.2 0.7"/>
<path d="M629.0 447.0 L634.0 474.0" stroke-width="5.31" stroke-linecap="butt" stroke-dasharray="2.2 0.7"/>
<path d="M625.8 370.4 L652.3 390.8 L634.0 400.0" stroke-width="1.65" />
<path d="M633.0 412.0 L638.0 440.0" stroke-width="2.12" />
<path d="M643.0 408.0 L647.0 436.0" stroke-width="1.53" />
<path d="M640.0 447.0 L644.0 472.0 L628.9 475.3 L627.0 448.0" stroke-width="1.65" />
<path d="M644.0 444.0 L652.0 441.0 L655.0 462.0" stroke-width="1.53" />
<ellipse cx="657" cy="459" rx="1.8" ry="2.2" transform="rotate(0 657 459)" stroke-width="1.42" />
<ellipse cx="651" cy="395" rx="1.6" ry="2" transform="rotate(0 651 395)" stroke-width="1.42" />
<path d="M710.0 304.2C710.9 301.8 713.2 293.8 715.6 290.0C718.0 286.2 721.4 283.3 724.2 281.4C727.1 279.5 731.3 279.0 732.7 278.5" stroke-width="2.12" />
<path d="M732.7 278.5 L739.2 287.1 L732.7 292.8" stroke-width="2.12" />
<path d="M732.7 292.8C732.2 294.2 730.1 298.7 729.9 301.3C729.7 303.9 731.1 307.3 731.3 308.5" stroke-width="1.89" />
<path d="M727.5 281.0 L733.0 290.5" stroke-width="1.77" />
<path d="M714.5 303.0C715.2 301.0 716.9 294.1 719.0 291.0C721.1 287.9 725.7 285.6 727.0 284.5" stroke-width="3.54" />
<path d="M719.5 305.5C720.1 303.8 721.2 297.7 723.0 295.0C724.8 292.3 728.8 290.4 730.0 289.5" stroke-width="3.54" />
<ellipse cx="727" cy="312" rx="3.4" ry="4.2" transform="rotate(-20 727 312)" stroke-width="2.12" />
<path d="M710.0 304.2C708.7 305.6 703.6 308.4 702.1 312.7C700.6 317.0 700.6 322.7 700.7 329.8C700.8 336.9 701.5 347.9 702.8 355.5C704.1 363.1 706.4 369.2 708.5 375.4C710.6 381.6 714.4 389.6 715.6 392.5" stroke-width="2.01" />
<path d="M725.6 318.4C725.0 320.3 722.4 325.1 722.0 329.8C721.6 334.6 722.4 341.4 723.5 346.9C724.6 352.4 726.7 357.9 728.5 362.6C730.3 367.4 733.2 373.3 734.2 375.4" stroke-width="2.01" />
<path d="M710.0 304.2 L721.0 309.5 L725.6 318.4" stroke-width="2.01" />
<path d="M734.2 375.4C734.4 376.3 735.8 379.6 735.6 381.0C735.4 382.4 733.4 383.5 733.0 384.0" stroke-width="1.77" />
<path d="M734.2 375.4C734.9 374.9 736.6 372.1 738.4 372.6C740.2 373.1 743.7 376.2 744.9 378.3C746.1 380.4 745.5 384.2 745.6 385.4" stroke-width="2.01" />
<path d="M745.6 385.4 L725.6 399.7 L720.0 401.0 L717.0 395.4" stroke-width="2.01" />
<path d="M709.2 317.0 L716.4 319.2 L710.0 331.3Z" stroke-width="1.89" />
<path d="M711.0 333.0C711.3 336.8 711.3 347.5 712.8 355.5C714.3 363.5 718.8 376.8 720.0 381.0" stroke-width="1.53" />
<path d="M712.5 368.0 L718.0 385.0" stroke-width="3.78" />
<path d="M716.0 384.0 L721.0 397.0" stroke-width="2.83" />
<ellipse cx="721.5" cy="396.5" rx="2.6" ry="3.6" transform="rotate(-20 721.5 396.5)" stroke-width="1.77" />
<path d="M752.7 365.5 L772.6 355.5" stroke-width="2.01" />
<path d="M757.0 378.3 L778.3 368.3" stroke-width="2.01" />
<ellipse cx="754.8" cy="371.9" rx="4.6" ry="6.8" transform="rotate(-25 754.8 371.9)" stroke-width="2.24" />
<ellipse cx="754.8" cy="371.9" rx="2.2" ry="3.8" transform="rotate(-25 754.8 371.9)" stroke-width="1.65" />
<ellipse cx="781.2" cy="359.8" rx="4.6" ry="10" transform="rotate(-25 781.2 359.8)" stroke-width="2.60" />
<ellipse cx="776" cy="361.5" rx="4" ry="8.6" transform="rotate(-25 776 361.5)" stroke-width="1.77" />
<path d="M747.4 406.6C746.3 407.4 742.8 409.7 741.0 411.5C739.2 413.3 737.5 413.9 736.4 417.5C735.3 421.1 735.1 426.7 734.2 432.9C733.3 439.1 732.3 448.4 731.0 454.8C729.7 461.2 727.3 468.5 726.6 471.2" stroke-width="3.42" />
<path d="M726.6 471.2C725.5 473.9 721.8 481.8 720.0 487.6C718.2 493.5 716.5 503.2 715.8 506.3" stroke-width="2.60" />
<path d="M756.0 420.5C760.0 420.1 773.0 418.5 780.0 418.2C787.0 417.9 791.8 417.5 798.0 418.5C804.2 419.5 811.6 422.0 817.4 424.4C823.2 426.8 828.6 429.7 833.0 433.0C837.4 436.3 841.8 440.8 844.0 444.0C846.2 447.2 846.0 449.0 846.3 452.0C846.6 455.0 845.9 458.5 845.8 462.0C845.7 465.5 845.5 471.2 845.5 473.0" stroke-width="5.19" />
<path d="M845.5 473.0C844.3 475.5 842.0 481.8 838.1 488.0C834.2 494.2 827.5 502.9 822.2 510.5C816.9 518.0 810.9 527.8 806.4 533.3C801.9 538.8 796.9 541.8 795.0 543.5" stroke-width="2.60" />
<path d="M795.0 543.5C793.8 544.4 793.5 546.6 788.0 549.0C782.5 551.4 770.5 556.3 762.0 557.7C753.5 559.1 743.7 559.3 737.0 557.5C730.3 555.7 725.7 551.8 722.0 546.7C718.3 541.6 715.9 532.5 714.7 527.0C713.5 521.5 715.0 516.2 715.0 514.0" stroke-width="4.01" />
<path d="M715.0 514.0 L715.8 506.3" stroke-width="2.60" />
<path d="M738.5 437.0 L751.0 425.0 L760.5 448.0 L746.5 462.5 L738.5 437.0" stroke-width="1.77" />
<path d="M746.5 462.5 L760.5 448.0 L763.0 453.0 L752.0 464.0" stroke-width="1.53" />
<ellipse cx="745" cy="439.5" rx="1.6" ry="2" transform="rotate(0 745 439.5)" stroke-width="1.42" />
<ellipse cx="751.5" cy="457" rx="2.2" ry="3" transform="rotate(-30 751.5 457)" stroke-width="1.53" />
<path d="M772.5 443.5L783 438.3" stroke-width="5.43" />
<ellipse cx="785.4" cy="437.2" rx="3.3" ry="4" transform="rotate(-25 785.4 437.2)" stroke-width="2.83" fill="#fff"/>
<path d="M870.5 509.0C872.4 510.2 877.8 513.4 882.0 516.0C886.2 518.6 889.5 520.8 895.6 524.7C901.7 528.6 912.4 535.4 918.5 539.4C924.6 543.4 928.1 545.3 932.0 549.0C935.9 552.7 939.0 555.7 942.0 561.4C945.0 567.1 947.8 577.0 950.0 583.4C952.2 589.8 953.5 595.2 955.0 600.0C956.5 604.8 958.4 607.0 958.8 612.0C959.2 617.0 957.4 624.2 957.2 630.0C957.0 635.8 956.3 642.7 957.6 647.0C958.9 651.3 962.1 653.0 965.0 656.0C967.9 659.0 971.2 660.3 975.0 664.7C978.8 669.1 984.4 676.3 987.6 682.2C990.8 688.1 992.5 693.3 994.0 700.0C995.5 706.7 995.8 714.0 996.4 722.3C997.0 730.6 997.2 740.0 997.5 750.0C997.8 760.0 998.2 775.5 998.0 782.5C997.8 789.5 996.3 790.4 996.0 792.0" stroke-width="4.96" />
<path d="M996.0 792.0C995.0 793.3 993.2 796.7 990.0 800.0C986.8 803.3 980.7 809.1 977.0 812.0C973.3 814.9 971.8 815.3 967.6 817.5C963.4 819.7 956.6 823.0 952.0 825.0C947.4 827.0 942.0 828.8 940.0 829.5" stroke-width="2.95" />
<path d="M940.0 829.5C938.0 829.8 931.8 830.9 928.0 831.0C924.2 831.1 922.6 831.8 917.5 830.0C912.4 828.2 903.6 822.8 897.4 820.0C891.1 817.2 884.6 815.1 880.0 813.0C875.4 810.9 873.2 810.5 869.9 807.5C866.6 804.5 862.9 799.2 860.0 795.0C857.1 790.8 856.5 788.8 852.3 782.5C848.1 776.2 841.9 766.2 834.8 757.4C827.7 748.6 817.7 738.6 809.7 729.8C801.7 721.0 792.9 713.1 787.0 704.8C781.1 696.4 777.7 688.5 774.6 679.7C771.5 670.9 769.0 661.6 768.4 652.0C767.8 642.4 768.8 631.2 770.9 622.0C773.0 612.8 778.6 603.3 780.9 597.0C783.2 590.7 783.2 589.2 784.7 584.0C786.2 578.8 787.9 571.4 790.0 566.0C792.1 560.6 794.3 556.3 797.3 551.5C800.3 546.7 806.2 539.4 808.0 537.0" stroke-width="5.31" />
<path d="M808.0 537.0C810.4 534.3 817.3 523.8 822.3 521.0C827.3 518.2 833.1 520.9 838.0 520.5C842.9 520.1 848.6 519.5 851.6 518.5C854.6 517.5 854.3 515.4 856.0 514.5C857.7 513.6 859.6 513.9 862.0 513.0C864.4 512.1 869.1 509.7 870.5 509.0" stroke-width="3.30" />
<ellipse cx="841.8" cy="669.7" rx="30" ry="42.5" transform="rotate(-22 841.8 669.7)" stroke-width="4.72" />
<ellipse cx="841.8" cy="669.7" rx="27.5" ry="40.5" transform="rotate(-22 841.8 669.7)" stroke-width="1.42" stroke-linecap="butt" stroke-dasharray="1.5 1.5"/>
<ellipse cx="841.8" cy="669.7" rx="12.5" ry="19" transform="rotate(-22 841.8 669.7)" stroke-width="2.12" />
<ellipse cx="842.3" cy="670.2" rx="9.5" ry="15.5" transform="rotate(-22 842.3 670.2)" stroke-width="1.65" />
<ellipse cx="843.3" cy="671" rx="7" ry="12.5" transform="rotate(-22 843.3 671)" stroke-width="2.60" />
<ellipse cx="863.0" cy="666.9" rx="2.9" ry="4.6" transform="rotate(-22 863.0 666.9)" stroke-width="2.71" />
<ellipse cx="862.5" cy="688.7" rx="2.9" ry="4.6" transform="rotate(-22 862.5 688.7)" stroke-width="2.71" />
<ellipse cx="849.9" cy="699.4" rx="2.9" ry="4.6" transform="rotate(-22 849.9 699.4)" stroke-width="2.71" />
<ellipse cx="832.5" cy="692.6" rx="2.9" ry="4.6" transform="rotate(-22 832.5 692.6)" stroke-width="2.71" />
<ellipse cx="820.6" cy="672.5" rx="2.9" ry="4.6" transform="rotate(-22 820.6 672.5)" stroke-width="2.71" />
<ellipse cx="821.1" cy="650.7" rx="2.9" ry="4.6" transform="rotate(-22 821.1 650.7)" stroke-width="2.71" />
<ellipse cx="833.7" cy="640.0" rx="2.9" ry="4.6" transform="rotate(-22 833.7 640.0)" stroke-width="2.71" />
<ellipse cx="851.1" cy="646.8" rx="2.9" ry="4.6" transform="rotate(-22 851.1 646.8)" stroke-width="2.71" />
<path d="M876.5 634.0C876.8 632.0 876.4 625.0 878.0 622.0C879.6 619.0 877.3 620.3 886.0 616.0C894.7 611.7 920.8 599.7 930.0 596.0C939.2 592.3 938.0 593.3 941.0 594.0C944.0 594.7 946.3 596.5 948.0 600.0C949.7 603.5 950.7 608.3 951.0 615.0C951.3 621.7 951.8 634.5 950.0 640.0C948.2 645.5 947.5 644.5 940.0 648.0C932.5 651.5 912.8 659.0 905.0 661.0C897.2 663.0 895.0 660.2 893.0 660.0" stroke-width="3.07" />
<ellipse cx="893" cy="637" rx="15" ry="24.5" transform="rotate(-17 893 637)" stroke-width="3.54" />
<ellipse cx="893" cy="637" rx="12.5" ry="21.5" transform="rotate(-17 893 637)" stroke-width="1.77" stroke-linecap="butt" stroke-dasharray="2 1.6"/>
<ellipse cx="896.5" cy="639" rx="8.5" ry="16.5" transform="rotate(-17 896.5 639)" stroke-width="2.60" />
<path d="M888.0 628.0 L899.0 623.0 L904.0 640.0" stroke-width="1.53" />
<path d="M889.0 613.2L927.8 596.9" stroke-width="2.48" />
<path d="M892.6 613.9L932.6 597.1" stroke-width="2.48" />
<path d="M896.2 615.8L937.4 598.5" stroke-width="2.48" />
<path d="M899.6 618.8L942.0 601.0" stroke-width="2.48" />
<path d="M902.8 622.8L946.4 604.5" stroke-width="2.48" />
<path d="M905.4 627.5L950.2 608.6" stroke-width="2.48" />
<path d="M907.3 632.6L953.3 613.3" stroke-width="2.48" />
<path d="M908.6 638.0L953.4 619.2" stroke-width="2.48" />
<path d="M909.0 643.3L952.6 625.0" stroke-width="2.48" />
<path d="M908.7 648.3L951.1 630.5" stroke-width="2.48" />
<path d="M907.5 652.8L948.7 635.5" stroke-width="2.48" />
<path d="M905.6 656.4L945.6 639.6" stroke-width="2.48" />
<path d="M903.0 659.0L941.8 642.7" stroke-width="2.48" />
<path d="M903 658L909 650M897 661L900 655" stroke-width="1.42" />
<path d="M893.8 722.6C894.6 720.7 895.9 714.3 898.8 711.3C901.7 708.3 907.2 705.4 911.4 704.4C915.6 703.4 919.7 703.4 923.9 705.0C928.1 706.6 934.3 712.3 936.4 713.8" stroke-width="5.43" />
<path d="M936.4 713.8C938.7 716.5 946.2 724.2 950.2 730.1C954.2 736.0 958.1 743.0 960.2 748.9C962.3 754.8 963.1 760.4 962.7 765.2C962.3 770.0 960.6 774.2 957.7 777.7C954.8 781.2 949.8 784.8 945.2 786.5C940.6 788.2 932.7 787.5 930.2 787.7" stroke-width="7.08" />
<path d="M938.0 712.0C940.4 714.8 948.4 722.6 952.5 728.6C956.6 734.6 960.6 741.9 962.8 748.0C964.9 754.1 965.9 760.2 965.4 765.5C964.9 770.8 963.1 775.6 960.0 779.5C956.9 783.4 948.8 787.4 946.5 789.0" stroke-width="1.89" stroke="#fff" stroke-linecap="butt" stroke-dasharray="0.8 1.5"/>
<path d="M907.6 727.0C908.5 726.0 911.4 724.2 913.9 723.8C916.4 723.4 919.5 723.2 922.6 724.5C925.7 725.8 929.6 728.2 932.7 731.4C935.8 734.6 939.3 739.9 941.4 743.9C943.5 747.9 944.8 751.7 945.2 755.2C945.6 758.8 944.7 762.7 943.9 765.2C943.1 767.7 942.1 769.2 940.2 770.2C938.3 771.2 934.4 771.9 932.7 771.5C931.0 771.1 930.4 769.6 930.2 767.7C930.0 765.8 931.6 763.1 931.4 760.2C931.2 757.3 930.4 753.6 928.9 750.2C927.4 746.9 924.9 743.0 922.6 740.1C920.3 737.2 917.4 734.3 915.1 732.6C912.8 730.9 910.0 731.0 908.8 730.1C907.5 729.2 906.8 728.0 907.6 727.0Z" fill="#000" stroke-width="1.5"/>
<ellipse cx="907.6" cy="757.7" rx="21" ry="29" transform="rotate(-20 907.6 757.7)" stroke-width="2.01" fill="#fff"/>
<ellipse cx="907.9" cy="758" rx="18.3" ry="26" transform="rotate(-20 907.9 758)" stroke-width="1.65" />
<ellipse cx="908.8" cy="760.2" rx="14.5" ry="20.5" transform="rotate(-20 908.8 760.2)" stroke-width="4.01" />
<ellipse cx="909.3" cy="760.8" rx="9.5" ry="15.5" transform="rotate(-20 909.3 760.8)" stroke-width="1.89" />
<path d="M876.5 739.0 L882.5 742.5" stroke-width="5.19" />
<path d="M899.0 788.5 L906.0 784.5" stroke-width="5.19" />
<path d="M946.0 761.0 L950.0 765.5" stroke-width="4.25" />
<path d="M884.0 741.0 L893.0 733.0 L906.0 729.5" stroke-width="1.77" />
<path d="M906.0 784.0 L914.0 789.0 L926.0 786.0 L931.0 779.0" stroke-width="1.77" />
<path d="M929.0 770.0 L934.0 772.0 L935.5 780.0 L929.5 783.0" stroke-width="1.89" />
<path d="M995.3 690.0C996.8 689.3 1001.2 685.7 1004.0 686.0C1006.8 686.3 1009.9 688.2 1012.0 692.0C1014.1 695.8 1016.7 703.7 1016.6 708.8C1016.5 713.9 1013.9 720.1 1011.6 722.6C1009.3 725.1 1004.3 723.6 1002.8 723.8" stroke-width="3.07" />
<path d="M993.0 694.0C994.5 693.4 999.4 690.0 1002.0 690.5C1004.6 691.0 1006.8 693.8 1008.5 697.0C1010.2 700.2 1012.1 706.2 1012.0 710.0C1011.9 713.8 1008.7 718.3 1008.0 720.0" stroke-width="1.65" />
<path d="M970.3 703.8 L985.3 696.3" stroke-width="1.89" />
<path d="M981.5 733.2 L1002.8 723.8" stroke-width="1.89" />
<ellipse cx="976.5" cy="717.6" rx="9.6" ry="15.6" transform="rotate(-22 976.5 717.6)" stroke-width="2.12" />
<ellipse cx="971.5" cy="710.5" rx="1.8" ry="3" transform="rotate(-22 971.5 710.5)" stroke-width="1.18" fill="#000"/>
<ellipse cx="979" cy="717" rx="2.4" ry="3.6" transform="rotate(-22 979 717)" stroke-width="1.65" />
<ellipse cx="974" cy="722.5" rx="1.8" ry="2.8" transform="rotate(-22 974 722.5)" stroke-width="1.18" fill="#000"/>
<ellipse cx="981.5" cy="727" rx="1.8" ry="2.8" transform="rotate(-22 981.5 727)" stroke-width="1.42" />
<ellipse cx="847.6" cy="792.5" rx="10.5" ry="17.5" transform="rotate(-25 847.6 792.5)" stroke-width="3.07" />
<path d="M840.5 777.5C842.5 776.3 848.4 772.3 852.6 770.3C856.8 768.3 862.1 766.0 865.9 765.7C869.6 765.4 872.6 765.5 875.1 768.3C877.6 771.0 880.4 777.9 881.1 782.2C881.8 786.5 881.2 791.0 879.1 794.1C877.0 797.2 872.0 798.6 868.5 800.7C865.0 802.8 859.8 805.5 858.0 806.5" stroke-width="2.24" />
<ellipse cx="817.3" cy="811.5" rx="12.5" ry="20.5" transform="rotate(-25 817.3 811.5)" stroke-width="2.71" />
<ellipse cx="811.6" cy="802" rx="2.8" ry="4.2" transform="rotate(-25 811.6 802)" stroke-width="1.18" fill="#000"/>
<ellipse cx="821" cy="820.5" rx="2.8" ry="4.2" transform="rotate(-25 821 820.5)" stroke-width="1.18" fill="#000"/>
<ellipse cx="809.8" cy="813.5" rx="1.7" ry="2.4" transform="rotate(-25 809.8 813.5)" stroke-width="1.18" fill="#000"/>
<ellipse cx="824.6" cy="807.5" rx="1.5" ry="2.2" transform="rotate(-25 824.6 807.5)" stroke-width="1.18" fill="#000"/>
<path d="M792.5 813.4L777.3 820.8" stroke-width="5.66" stroke-linecap="butt"/>
<path d="M779.0 819.0 L751.0 834.5" stroke-width="1.65" />
<path d="M781.0 824.0 L753.0 839.5" stroke-width="1.65" />
<path d="M746.0 832.5 L752.0 830.0 L757.0 838.0 L750.0 842.0 L746.0 832.5" stroke-width="1.89" fill="#fff"/>
<path d="M737.5 840.0 L746.0 835.5 L749.0 842.0 L740.5 846.5 L737.5 840.0" stroke-width="2.60" fill="#fff"/>
<ellipse cx="738.5" cy="843.8" rx="2" ry="3.4" transform="rotate(-25 738.5 843.8)" stroke-width="2.36" />
<ellipse cx="731" cy="862.5" rx="3.4" ry="2" transform="rotate(25 731 862.5)" stroke-width="1.77" />
<path d="M692.5 848.0C692.1 846.8 690.3 843.1 690.0 841.0C689.7 838.9 689.9 836.5 690.5 835.5C691.1 834.5 693.0 835.1 693.5 835.0" stroke-width="2.36" />
<path d="M695.0 848.5C694.7 847.2 693.2 842.8 693.0 841.0C692.8 839.2 693.4 838.5 693.5 838.0" stroke-width="1.42" />
<path d="M691.0 850.0 L700.0 846.0 L706.0 859.0 L714.0 861.0 L719.0 878.0 L717.0 889.0 L708.0 893.0 L700.0 889.0 L703.0 878.0 L696.0 862.0 L691.0 850.0" stroke-width="1.89" />
<path d="M700.0 846.0 L704.0 860.0 L711.0 864.0 L715.0 880.0" stroke-width="1.42" />
<path d="M701.0 888.0C702.2 887.4 705.5 884.8 708.0 884.5C710.5 884.2 714.7 885.8 716.0 886.0" stroke-width="1.53" />
<path d="M695.4 893.2L684 899.7" stroke-width="5.90" stroke-linecap="butt"/>
<path d="M695.4 893.2L684 899.7" stroke-width="2.36" stroke="#fff" stroke-linecap="butt" stroke-dasharray="1 1.6"/>
<ellipse cx="678.5" cy="903" rx="6" ry="8" transform="rotate(-25 678.5 903)" stroke-width="1.89" fill="#fff"/>
<ellipse cx="676" cy="904" rx="4" ry="6.5" transform="rotate(-25 676 904)" stroke-width="1.53" />
<path d="M832.0 145.0 L832.0 149.4 L822.0 156.0 L822.0 159.0 L906.4 208.5 L913.0 210.3" stroke-width="1.89" />
<path d="M913.0 210.3C914.5 209.8 919.5 207.5 921.7 207.4C923.9 207.3 924.7 209.6 926.0 210.0C927.3 210.4 927.9 210.4 929.4 209.6C930.9 208.8 933.4 206.1 935.0 205.0C936.6 203.9 938.2 204.1 939.3 203.0C940.4 201.9 941.1 199.4 941.5 198.7" stroke-width="1.77" />
<path d="M952.4 145.0C952.4 146.2 952.6 149.8 952.4 152.0C952.2 154.2 952.2 156.2 951.3 158.0C950.4 159.8 948.1 161.5 947.0 163.0C945.9 164.5 945.1 166.3 944.7 167.0" stroke-width="1.77" />
<path d="M944.7 167.0C943.9 167.1 941.4 166.8 940.0 167.5C938.6 168.2 937.0 169.4 936.5 171.0C936.0 172.6 937.2 174.8 937.0 177.0C936.8 179.2 936.5 182.3 935.0 184.0C933.5 185.7 929.9 185.7 928.0 187.0C926.1 188.3 924.0 190.3 923.5 192.0C923.0 193.7 923.8 195.9 925.0 197.0C926.2 198.1 929.2 198.8 931.0 198.5C932.8 198.2 934.2 195.5 936.0 195.5C937.8 195.5 939.5 198.1 941.5 198.7C943.5 199.3 946.1 199.3 948.0 199.0C949.9 198.7 951.5 198.5 953.0 197.0C954.5 195.5 956.3 191.2 957.0 190.0" stroke-width="1.77" />
<ellipse cx="947.5" cy="182" rx="6.5" ry="10" transform="rotate(-15 947.5 182)" stroke-width="1.77" />
<path d="M950.0 172.5C950.8 172.9 953.9 173.4 955.0 175.0C956.1 176.6 956.2 180.8 956.5 182.0" stroke-width="1.53" />
<ellipse cx="938.5" cy="173" rx="1.6" ry="2.4" transform="rotate(0 938.5 173)" stroke-width="1.42" />
<ellipse cx="950.5" cy="194.5" rx="1.8" ry="2.4" transform="rotate(0 950.5 194.5)" stroke-width="1.42" />
<path d="M916.5 192.5 L923.0 197.0" stroke-width="1.53" />
<path d="M947 183.300L978.700 200.900" stroke-width="1.89" stroke-linecap="butt" stroke-dasharray="14 2.500 3 2.500"/>
<path d="M968.9 185.5L988.6 174.6" stroke-width="1.4"/>
<path d="M1040 149.4L1050 145.2" stroke-width="1.4"/>
<path d="M990.0 197.0C993.2 196.3 1001.2 199.0 1004.0 201.0C1006.8 203.0 1006.8 204.8 1007.0 209.0C1007.2 213.2 1006.8 222.6 1005.5 226.0C1004.2 229.4 1002.2 230.3 999.0 229.5C995.8 228.7 988.9 225.1 986.5 221.0C984.1 216.9 983.9 209.0 984.5 205.0C985.1 201.0 986.8 197.7 990.0 197.0Z" stroke-width="2.12" />
<ellipse cx="995.8" cy="213" rx="6" ry="11" transform="rotate(18 995.8 213)" stroke-width="1.77" />
<ellipse cx="989.5" cy="202.5" rx="1.5" ry="1.8" transform="rotate(0 989.5 202.5)" stroke-width="1.30" />
<ellipse cx="1001.5" cy="223.5" rx="1.5" ry="1.8" transform="rotate(0 1001.5 223.5)" stroke-width="1.30" />
<ellipse cx="1013" cy="221.5" rx="3" ry="5.5" transform="rotate(-25 1013 221.5)" stroke-width="1.65" />
<path d="M1013.5 216.5 L1023.0 220.5" stroke-width="1.65" />
<path d="M1013.0 227.0 L1021.0 231.0" stroke-width="1.65" />
<path d="M1027.0 219.0C1030.3 218.3 1037.1 220.2 1040.0 222.0C1042.9 223.8 1043.9 225.3 1044.5 230.0C1045.1 234.7 1044.8 246.1 1043.5 250.0C1042.2 253.9 1039.9 254.8 1036.5 253.5C1033.1 252.2 1025.8 246.6 1023.0 242.0C1020.2 237.4 1019.3 229.8 1020.0 226.0C1020.7 222.2 1023.7 219.7 1027.0 219.0Z" stroke-width="2.12" />
<ellipse cx="1028.5" cy="223" rx="1.5" ry="2" transform="rotate(0 1028.5 223)" stroke-width="1.30" />
<ellipse cx="1038.5" cy="248" rx="1.5" ry="2" transform="rotate(0 1038.5 248)" stroke-width="1.30" />
<path d="M1032.0 229.0C1031.5 230.2 1029.2 233.3 1029.0 236.0C1028.8 238.7 1029.7 243.2 1031.0 245.0C1032.3 246.8 1036.0 246.7 1037.0 247.0" stroke-width="1.65" />
<path d="M1032.0 229.0 L1046.0 226.5" stroke-width="1.65" />
<path d="M1037.0 247.0 L1047.5 244.5" stroke-width="1.65" />
<ellipse cx="1046.5" cy="235.5" rx="3.6" ry="9" transform="rotate(8 1046.5 235.5)" stroke-width="1.65" />
<path d="M1055.5 242L1067 248.5" stroke-width="6.14" stroke-linecap="butt"/>
<ellipse cx="1069.5" cy="250" rx="4.5" ry="7" transform="rotate(25 1069.5 250)" stroke-width="1.89" fill="#fff"/>
<ellipse cx="1072.5" cy="251.5" rx="3.2" ry="5.5" transform="rotate(25 1072.5 251.5)" stroke-width="1.65" fill="#fff"/>
<path d="M991.0 377.3C994.2 375.6 1003.8 369.7 1010.0 367.0C1016.2 364.3 1022.5 363.7 1028.0 361.0C1033.5 358.3 1039.2 353.0 1043.0 351.0C1046.8 349.0 1048.2 350.7 1051.0 349.0C1053.8 347.3 1056.5 343.2 1060.0 341.0C1063.5 338.8 1067.7 338.3 1072.0 336.0C1076.3 333.7 1082.5 328.7 1086.0 327.0C1089.5 325.3 1090.7 327.5 1093.0 326.0C1095.3 324.5 1096.2 320.3 1100.0 318.0C1103.8 315.7 1110.8 314.5 1116.0 312.0C1121.2 309.5 1127.5 304.7 1131.0 303.0C1134.5 301.3 1134.7 303.5 1137.0 302.0C1139.3 300.5 1141.2 296.2 1145.0 294.0C1148.8 291.8 1155.8 291.3 1160.0 289.0C1164.2 286.7 1167.1 282.1 1170.0 280.0C1172.9 277.9 1176.3 277.2 1177.6 276.6" stroke-width="2.01" />
<path d="M1116.0 312.0C1116.8 310.8 1118.7 306.6 1121.0 305.0C1123.3 303.4 1128.5 302.9 1130.0 302.5" stroke-width="1.53" />
<path d="M1051.0 349.0C1051.8 347.8 1053.8 343.6 1056.0 342.0C1058.2 340.4 1062.7 339.9 1064.0 339.5" stroke-width="1.53" />
<path d="M1160.0 289.0C1161.0 287.7 1163.2 282.8 1166.0 281.0C1168.8 279.2 1175.2 278.9 1177.0 278.5" stroke-width="1.53" />
<path d="M1086.0 327.0 L1089.0 323.0 L1097.0 321.0" stroke-width="1.53" />
<ellipse cx="1127.5" cy="350.5" rx="36.5" ry="21.5" transform="rotate(-4 1127.5 350.5)" stroke-width="2.01" />
<ellipse cx="1071.3" cy="381.7" rx="36.5" ry="21.5" transform="rotate(-4 1071.3 381.7)" stroke-width="2.01" />
<path d="M1177.600 296C1158 297 1146 308 1146 318C1146 329 1160 338 1177.600 339" stroke-width="2.01" />
<path d="M991.0 377.3C990.8 379.4 990.2 386.1 990.0 390.0C989.8 393.9 990.4 398.2 989.7 401.0C989.0 403.8 988.1 405.7 986.0 407.0C983.9 408.3 979.7 406.3 977.0 408.6C974.3 410.9 970.8 418.9 969.6 421.0" stroke-width="2.01" />
<path d="M969.6 421.0 L953.3 501.3 L953.3 552.7 L992.0 572.8" stroke-width="2.01" />
<path d="M991.0 377.3 L1080.0 430.0" stroke-width="3.54" />
<path d="M1006.0 387.0 L1006.0 391.0 L1063.6 428.0 L1063.6 424.0" stroke-width="2.12" />
<path d="M1080.0 430.0C1080.2 431.0 1079.7 434.2 1081.0 436.0C1082.3 437.8 1086.1 439.5 1088.0 441.0C1089.9 442.5 1090.4 443.3 1092.4 445.0C1094.4 446.7 1097.5 449.8 1100.0 451.0C1102.5 452.2 1105.3 452.5 1107.5 452.5C1109.7 452.5 1110.6 450.4 1113.0 451.0C1115.4 451.6 1118.3 454.1 1122.0 456.0C1125.7 457.9 1132.8 461.4 1135.0 462.5" stroke-width="3.07" />
<path d="M1135.0 462.5 L1177.6 523.9" stroke-width="3.78" />
<path d="M1135.0 462.5 L1177.6 523.9" stroke-width="1.18" stroke="#fff" stroke-linecap="butt" stroke-dasharray="1.2 1.5"/>
<path d="M1080.0 427.4C1081.7 426.2 1085.8 422.2 1090.0 420.0C1094.2 417.8 1101.2 416.2 1105.0 414.0C1108.8 411.8 1111.0 409.0 1113.0 407.0C1115.0 405.0 1113.3 404.2 1117.0 402.0C1120.7 399.8 1128.7 396.8 1135.0 394.0C1141.3 391.2 1149.8 387.0 1155.0 385.0C1160.2 383.0 1163.5 383.5 1166.0 382.0C1168.5 380.5 1168.1 377.4 1170.0 376.0C1171.9 374.6 1176.3 373.9 1177.6 373.5" stroke-width="2.01" />
<path d="M1084.0 432.0C1085.7 430.7 1090.0 426.3 1094.0 424.0C1098.0 421.7 1104.3 420.2 1108.0 418.0C1111.7 415.8 1114.0 413.0 1116.0 411.0C1118.0 409.0 1116.3 408.2 1120.0 406.0C1123.7 403.8 1131.8 400.8 1138.0 398.0C1144.2 395.2 1152.0 391.0 1157.0 389.0C1162.0 387.0 1165.5 387.5 1168.0 386.0C1170.5 384.5 1170.4 381.3 1172.0 380.0C1173.6 378.7 1176.7 378.3 1177.6 378.0" stroke-width="1.53" />
<path d="M1166.0 382.0C1166.3 380.3 1166.1 375.0 1168.0 372.0C1169.9 369.0 1176.0 365.3 1177.6 364.0" stroke-width="1.65" />
<path d="M1095.0 423.0 L1096.0 428.0" stroke-width="1.42" />
<path d="M964.6 488.8C966.3 486.2 971.3 477.8 975.0 473.0C978.7 468.2 982.8 462.2 987.0 460.0C991.2 457.8 995.4 459.1 1000.0 459.5C1004.6 459.9 1010.2 461.1 1014.7 462.5C1019.2 463.9 1024.1 466.1 1027.0 468.0C1029.9 469.9 1030.7 470.5 1032.0 473.8C1033.3 477.1 1034.3 483.0 1035.0 488.0C1035.7 493.0 1035.2 499.8 1036.0 503.8C1036.8 507.8 1038.5 509.5 1040.0 512.0C1041.5 514.5 1043.6 515.6 1044.8 518.9C1046.0 522.2 1046.6 527.4 1047.0 532.0C1047.4 536.6 1046.7 543.1 1047.0 546.4C1047.3 549.7 1048.7 551.1 1049.0 552.0" stroke-width="2.01" />
<path d="M964.6 488.8C964.7 491.5 964.6 499.6 965.0 505.0C965.4 510.4 966.3 516.4 967.0 521.4C967.7 526.4 968.2 530.8 969.0 535.0C969.8 539.2 970.2 542.2 972.0 546.4C973.8 550.6 977.0 556.1 980.0 560.0C983.0 563.9 986.7 567.5 989.7 570.0C992.7 572.5 996.6 574.2 998.0 575.0" stroke-width="2.01" />
<path d="M1049 551C1046 540 1038 531 1030 532C1020 534 1017 548 1021 563C1026 578 1038 583 1049 580" stroke-width="2.01" />
<path d="M1028.0 566.0C1029.0 567.7 1031.5 573.7 1034.0 576.0C1036.5 578.3 1041.5 579.3 1043.0 580.0" stroke-width="1.53" />
<ellipse cx="1071" cy="546.4" rx="13.5" ry="20" transform="rotate(-22 1071 546.4)" stroke-width="2.01" />
<path d="M1110.0 497.0C1113.2 495.8 1120.7 494.0 1125.0 497.0C1129.3 500.0 1133.7 508.7 1136.0 515.0C1138.3 521.3 1139.0 530.0 1138.8 535.0C1138.6 540.0 1137.5 542.8 1135.0 545.0C1132.5 547.2 1126.5 546.3 1124.0 548.0C1121.5 549.7 1121.2 552.7 1120.0 555.0C1118.8 557.3 1119.0 561.0 1117.0 562.0C1115.0 563.0 1111.0 563.3 1108.0 561.0C1105.0 558.7 1100.8 552.3 1099.0 548.0C1097.2 543.7 1096.7 538.5 1097.0 535.0C1097.3 531.5 1099.5 528.7 1101.0 527.0C1102.5 525.3 1105.5 527.0 1106.0 525.0C1106.5 523.0 1104.0 518.5 1104.0 515.0C1104.0 511.5 1105.0 507.0 1106.0 504.0C1107.0 501.0 1106.8 498.2 1110.0 497.0Z" stroke-width="2.01" />
<path d="M959.600 599L1072.400 546.400" stroke-width="2.12" stroke-linecap="butt" stroke-dasharray="86 20 19"/>
<path d="M1054.800 554.5L1054.800 674.700" stroke-width="2.01" stroke-linecap="butt" stroke-dasharray="24 3 13 3 41 3 12 3 40"/>
<path d="M1054.800 674.700L1023.500 692.200" stroke-width="2.01" stroke-linecap="butt" stroke-dasharray="22 3 5 3"/>
<path d="M1117.5 571.5C1118.6 570.1 1121.6 565.1 1124.0 563.0C1126.4 560.9 1129.3 559.3 1132.0 559.0C1134.7 558.7 1137.0 559.8 1140.0 561.0C1143.0 562.2 1146.7 565.3 1150.0 566.0C1153.3 566.7 1157.0 566.2 1160.0 565.0C1163.0 563.8 1165.1 560.0 1168.0 559.0C1170.9 558.0 1176.0 559.0 1177.6 559.0" stroke-width="2.01" />
<path d="M1117.5 571.5C1117.2 574.6 1115.9 583.6 1116.0 590.0C1116.1 596.4 1117.0 603.3 1118.0 610.0C1119.0 616.7 1121.6 623.6 1122.0 630.0C1122.4 636.4 1120.8 645.3 1120.5 648.4" stroke-width="2.60" />
<path d="M1059.8 612.0 L1120.5 648.4 L1172.0 619.0" stroke-width="2.01" />
<path d="M1172.0 619.0 L1170.5 614.5 L1177.6 611.5" stroke-width="1.65" />
<path d="M1142.0 636.0 L1146.0 634.0" stroke-width="1.42" />
<path d="M1004.0 580.0 L1050.0 606.0" stroke-width="1.89" />
<path d="M1020.0 582.0 L1049.0 598.0" stroke-width="2.60" />
<path d="M1020.0 582.0 L1017.0 586.0" stroke-width="1.65" />
<path d="M1054.8 600.0 L1070.0 608.0" stroke-width="1.89" />
<path d="M1062.0 610.0C1062.7 606.7 1063.8 594.5 1066.0 590.0C1068.2 585.5 1070.7 585.0 1075.0 583.0C1079.3 581.0 1087.8 577.7 1092.0 578.0C1096.2 578.3 1097.3 581.3 1100.0 585.0C1102.7 588.7 1106.0 594.2 1108.0 600.0C1110.0 605.8 1111.7 613.3 1112.0 620.0C1112.3 626.7 1110.3 636.7 1110.0 640.0" stroke-width="2.01" />
<ellipse cx="1078" cy="603" rx="5.5" ry="9.5" transform="rotate(-25 1078 603)" stroke-width="1.89" />
<path d="M1090.0 612.0C1088.5 606.7 1087.8 601.0 1089.0 598.0C1090.2 595.0 1094.2 593.2 1097.0 594.0C1099.8 594.8 1103.5 598.3 1106.0 603.0C1108.5 607.7 1111.7 617.2 1112.0 622.0C1112.3 626.8 1110.3 630.7 1108.0 632.0C1105.7 633.3 1101.0 633.3 1098.0 630.0C1095.0 626.7 1091.5 617.3 1090.0 612.0Z" stroke-width="2.01" />
</g></svg>
<div id="hdr" class="abs"></div>
<div id="search" class="abs">Введите номер детали, например, 9091901164</div>
<div id="user" class="abs">Сергей  (id 788504)</div>
<div id="vscroll" class="abs"></div>
<div id="thumb" class="abs"></div>
<!-- opera logo -->
<svg class="abs" style="left:10px;top:4px" width="16" height="16" viewBox="0 0 16 16"><ellipse cx="8" cy="8" rx="5.6" ry="6.2" fill="none" stroke="#e0202c" stroke-width="3.2"/><ellipse cx="8" cy="8" rx="3.2" ry="5.4" fill="#c6d293"/></svg>
<!-- window controls -->
<svg class="abs" style="left:1180px;top:0" width="98" height="24" viewBox="0 0 98 24"><rect x="5" y="12.5" width="8" height="2.5" fill="#1e2410"/><rect x="31.8" y="8.3" width="9" height="6.6" fill="none" stroke="#1e2410" stroke-width="1.4"/><rect x="31.2" y="7" width="10.2" height="2.4" fill="#1e2410"/><path d="M66.5 6.8L75.5 15.4M75.5 6.8L66.5 15.4" stroke="#fff" stroke-width="1.8" fill="none"/></svg>
<!-- plus & tab menu -->
<svg class="abs" style="left:1150px;top:28px" width="120" height="26" viewBox="0 0 120 26"><path d="M4.8 12.5H15.2M10 7.3V17.7" stroke="#3d4a1c" stroke-width="1.9" fill="none"/><path d="M95.5 8H109.5M95.5 11.6H109.5" stroke="#45521f" stroke-width="1.6" fill="none"/><path d="M98.5 15L106.5 15L102.5 19Z" fill="#45521f"/></svg>
<!-- nav icons -->
<svg class="abs" style="left:6px;top:55px" width="160" height="39" viewBox="0 0 160 39">
<path d="M13 19.5L20.2 13.6V17.9H27V21.1H20.2V25.4Z" fill="#6b6b6b"/>
<path d="M58 19.5L50.8 13.6V17.9H44V21.1H50.8V25.4Z" fill="#b4b4b4"/>
<path d="M86.98 15.82A5.2 5.2 0 1 0 87.8 22.1" fill="none" stroke="#6b6b6b" stroke-width="2.6"/><path d="M90 13.1L90 18.7L84 18.5Z" fill="#6b6b6b"/>
<g fill="#6b6b6b"><rect x="109" y="14" width="3.9" height="2.8"/><rect x="114.1" y="14" width="3.9" height="2.8"/><rect x="119.2" y="14" width="3.9" height="2.8"/><rect x="109" y="18.1" width="3.9" height="2.8"/><rect x="114.1" y="18.1" width="3.9" height="2.8"/><rect x="119.2" y="18.1" width="3.9" height="2.8"/><rect x="109" y="22.2" width="3.9" height="2.8"/><rect x="114.1" y="22.2" width="3.9" height="2.8"/></g>
<path d="M143 17.5H153V24.8H143Z" fill="#3c9a3c"/><path d="M145.2 18V15.4A2.8 2.8 0 0 1 150.8 15.4V18" fill="none" stroke="#3c9a3c" stroke-width="1.7"/>
</svg>
<div class="abs" style="left:275px;top:65px;width:1px;height:20px;background:#d0d0d0"></div>
<!-- heart / download icons -->
<svg class="abs" style="left:1150px;top:58px" width="122" height="34" viewBox="0 0 122 34"><path d="M20 22.8C14 18.6 12.2 16 12.2 13.4C12.2 11.2 13.9 9.6 15.9 9.6C17.6 9.6 19.1 10.6 20 12C20.9 10.6 22.4 9.6 24.1 9.6C26.1 9.6 27.8 11.2 27.8 13.4C27.8 16 26 18.6 20 22.8Z" fill="#7a7a7a"/>
<path d="M56.5 7H65.5V14.5H71.5L61 25L50.5 14.5H56.5Z" fill="#7db81f"/><path d="M58 7H64V12H58Z" fill="#9ad030"/><path d="M52 8V11.2M50.6 10.2L52 12.2L53.4 10.2M70 8V11.2M68.600 10.2L70 12.2L71.4 10.2" stroke="#6aa018" stroke-width="1" fill="none"/>
<rect x="83" y="7.5" width="1" height="18.5" fill="#c8c8c8"/>
<path d="M107.2 10.2A7.2 7.2 0 1 1 98.500 9.5" fill="none" stroke="#6b6b6b" stroke-width="2.2"/><path d="M101 11.5H103.400V16.500H106.100L102.200 21.2L98.300 16.500H101Z" fill="#6b6b6b"/><circle cx="107.400" cy="10" r="2.300" fill="#22b422"/></svg>
<!-- emex logo -->
<svg class="abs" style="left:6px;top:94px" width="200" height="51" viewBox="0 0 200 51">
<g fill="#fff"><rect x="56" y="21.500" width="42" height="2.200"/><rect x="28" y="24.800" width="70" height="2.200"/><rect x="28" y="28.300" width="72" height="2.200"/><rect x="82" y="32.300" width="18" height="2.200"/></g>
<g font-family="Liberation Sans,sans-serif" font-weight="bold" fill="#1f1b16" stroke="#1f1b16" stroke-width="0.7">
<text x="7.8" y="35.700" font-size="33.5" textLength="22" lengthAdjust="spacingAndGlyphs">e</text>
<text x="38.500" y="36" font-size="25.500" textLength="18.500" lengthAdjust="spacingAndGlyphs">M</text>
<text x="70" y="36" font-size="25.500" textLength="13.500" lengthAdjust="spacingAndGlyphs">E</text>
<text x="96.500" y="36" font-size="25.500" textLength="17.500" lengthAdjust="spacingAndGlyphs">X</text></g>
<g fill="#fff"><rect x="62" y="24.800" width="10" height="2.200"/><rect x="62" y="28.300" width="10" height="2.200"/></g>
<g fill="#14110c"><rect x="160" y="15.800" width="20" height="3"/><rect x="160" y="24" width="20" height="3"/><rect x="160" y="32.200" width="20" height="3"/></g>
</svg>
<!-- header icons -->
<svg class="abs" style="left:840px;top:94px" width="417" height="51" viewBox="0 0 417 51">
<circle cx="22" cy="23.400" r="8.400" fill="none" stroke="#1a1610" stroke-width="2.500"/><path d="M28 29.700L35.500 37" stroke="#1a1610" stroke-width="3.400" stroke-linecap="round"/>
<g stroke="#1a1610" fill="none"><path d="M130.500 14.800H135.300L140 30.500H153" stroke-width="2"/><path d="M136.500 17.800H155.800L153.300 27H139.300Z" stroke-width="1.800" fill="#1a1610"/><path d="M141 28V32.500H153.500" stroke-width="1.800"/></g>
<g fill="#fcaa22"><rect x="139.800" y="19.600" width="2.700" height="2.400"/><rect x="143.800" y="19.600" width="2.700" height="2.400"/><rect x="147.800" y="19.600" width="2.700" height="2.400"/><rect x="151.600" y="19.600" width="2" height="2.400"/><rect x="140.700" y="23.400" width="2.500" height="2.300"/><rect x="144.400" y="23.400" width="2.500" height="2.300"/><rect x="148.200" y="23.400" width="2.500" height="2.300"/></g>
<circle cx="142.500" cy="35.300" r="1.900" fill="#1a1610"/><circle cx="151.800" cy="35.300" r="1.900" fill="#1a1610"/>
<g stroke="#1a1610" stroke-width="2.600"><path d="M194 17.800H212M194 26H212M194 33.500H212"/></g>
<g stroke="#1a1610" stroke-width="1.600" fill="none"><path d="M186.300 17.600L188.200 19.600L191.500 15.300M186.300 25.800L188.200 27.800L191.500 23.500M186.300 33.300L188.200 35.300L191.500 31"/></g>
<path d="M395.400 26.600L400 31.200L404.600 26.600" stroke="#14110c" stroke-width="2.300" fill="none"/>
</svg>
<!-- scrollbar arrows -->
<svg class="abs" style="left:1257px;top:94px" width="15" height="882" viewBox="0 0 15 882"><path d="M4 10.500L7.500 7L11 10.500" stroke="#505050" stroke-width="1.600" fill="none"/><path d="M4 871L7.500 874.500L11 871" stroke="#505050" stroke-width="1.600" fill="none"/></svg>

</body>
</html>
